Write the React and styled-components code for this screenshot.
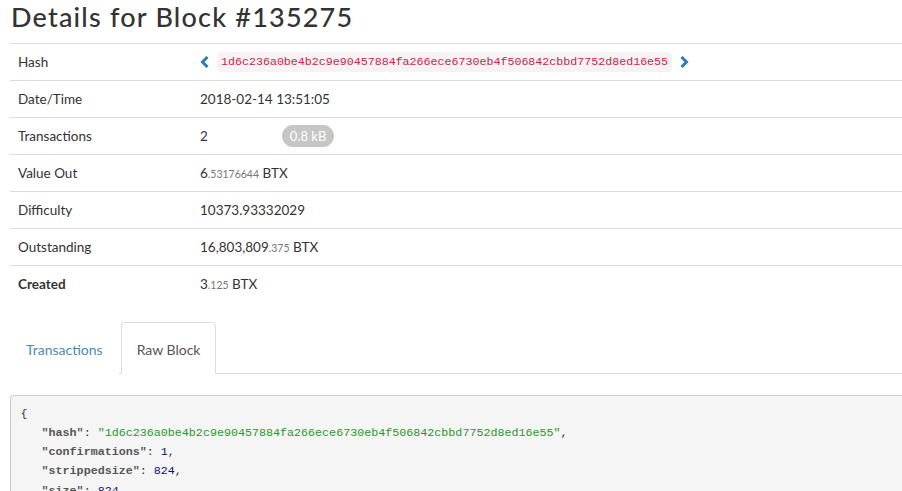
import React from "react";
import styled, { createGlobalStyle } from "styled-components";

const GlobalStyle = createGlobalStyle`
  html, body {
    margin: 0;
    padding: 0;
    background: #fff;
    overflow: hidden;
  }
  body {
    font-family: "Lato", "Open Sans", sans-serif;
    font-size: 13.5px;
    line-height: 20px;
    color: #333;
  }
`;

const Page = styled.div`
  padding: 0 0 0 10px;
`;

const Title = styled.h1`
  margin: 0 0 10px;
  font-size: 27px;
  font-weight: 500;
  line-height: 33px;
  color: #333;
  letter-spacing: 1.2px;
  padding-left: 1px;
`;

const Table = styled.div`
  margin-bottom: 20px;
`;

const Row = styled.div`
  display: grid;
  grid-template-columns: 182px 1fr;
  border-top: 1px solid #ddd;
`;

const Cell = styled.div`
  display: flex;
  align-items: center;
  padding: 8px;
  height: 20px;
  white-space: nowrap;
  font-weight: ${(p) => (p.$bold ? 700 : 400)};
`;

const HashWrap = styled.span`
  display: inline-flex;
  align-items: center;
  gap: 7px;
`;

const Code = styled.code`
  font-family: "Liberation Mono", "DejaVu Sans Mono", monospace;
  font-size: 11.65px;
  line-height: 16px;
  padding: 2px 4px;
  color: #c7254e;
  background: #f9f2f4;
  border-radius: 4px;
`;

const Chevron = ({ dir }) => (
  <svg width="10" height="12" viewBox="0 0 10 12">
    <path
      d={dir === "left" ? "M7.5 1 L2.5 6 L7.5 11" : "M2.5 1 L7.5 6 L2.5 11"}
      fill="none"
      stroke="#337ab7"
      strokeWidth="3"
    />
  </svg>
);

const Badge = styled.span`
  display: inline-block;
  margin-left: 74px;
  padding: 1px 8px;
  min-width: 35px;
  text-align: center;
  font-size: 13px;
  line-height: 20px;
  color: #fff;
  background: #c6c6c6;
  border-radius: 11px;
`;

const Dec = styled.span`
  font-size: 10.5px;
  line-height: 1;
  color: #777;
`;

const Tabs = styled.ul`
  display: flex;
  margin: 0;
  padding: 0;
  list-style: none;
  border-bottom: 1px solid #ddd;
`;

const Tab = styled.li`
  margin-right: 2px;
  margin-bottom: -1px;
  padding: 17px 15px 13px;
  font-size: 14px;
  line-height: 20px;
  border: 1px solid ${(p) => (p.$active ? "#ddd" : "transparent")};
  border-bottom-color: ${(p) => (p.$active ? "#fff" : "transparent")};
  border-radius: 4px 4px 0 0;
  background: #fff;
  color: ${(p) => (p.$active ? "#555" : "#4a8db1")};
`;

const Pre = styled.pre`
  margin: 21px 0 0;
  padding: 8.5px 9.5px;
  font-family: "Liberation Mono", "DejaVu Sans Mono", monospace;
  font-size: 11.7px;
  line-height: 19.3px;
  color: #333;
  background: #f5f5f5;
  border: 1px solid #ccc;
  border-right: none;
  border-radius: 4px 0 0 4px;
  height: 120px;
  overflow: hidden;
`;

const Key = styled.span`
  color: #555;
  font-weight: 700;
`;
const Str = styled.span`
  color: #1f9a1f;
`;
const Num = styled.span`
  color: #101070;
`;

export default function App() {
  return (
    <Page>
      <GlobalStyle />
      <Title>Details for Block #135275</Title>
      <Table>
        <Row>
          <Cell>Hash</Cell>
          <Cell>
            <HashWrap>
              <Chevron dir="left" />
              <Code>1d6c236a0be4b2c9e90457884fa266ece6730eb4f506842cbbd7752d8ed16e55</Code>
              <Chevron dir="right" />
            </HashWrap>
          </Cell>
        </Row>
        <Row>
          <Cell>Date/Time</Cell>
          <Cell>2018-02-14 13:51:05</Cell>
        </Row>
        <Row>
          <Cell>Transactions</Cell>
          <Cell>
            2<Badge>0.8 kB</Badge>
          </Cell>
        </Row>
        <Row>
          <Cell>Value Out</Cell>
          <Cell>
            <span>
              6<Dec>.53176644</Dec> BTX
            </span>
          </Cell>
        </Row>
        <Row>
          <Cell>Difficulty</Cell>
          <Cell>10373.93332029</Cell>
        </Row>
        <Row>
          <Cell>Outstanding</Cell>
          <Cell>
            <span>
              16,803,809<Dec>.375</Dec> BTX
            </span>
          </Cell>
        </Row>
        <Row>
          <Cell $bold>Created</Cell>
          <Cell>
            <span>
              3<Dec>.125</Dec> BTX
            </span>
          </Cell>
        </Row>
      </Table>
      <Tabs>
        <Tab>Transactions</Tab>
        <Tab $active>Raw Block</Tab>
      </Tabs>
      <Pre>
        {"{\n   "}
        <Key>"hash"</Key>: <Str>"1d6c236a0be4b2c9e90457884fa266ece6730eb4f506842cbbd7752d8ed16e55"</Str>,{"\n   "}
        <Key>"confirmations"</Key>: <Num>1</Num>,{"\n   "}
        <Key>"strippedsize"</Key>: <Num>824</Num>,{"\n   "}
        <Key>"size"</Key>: <Num>824</Num>,
      </Pre>
    </Page>
  );
}
